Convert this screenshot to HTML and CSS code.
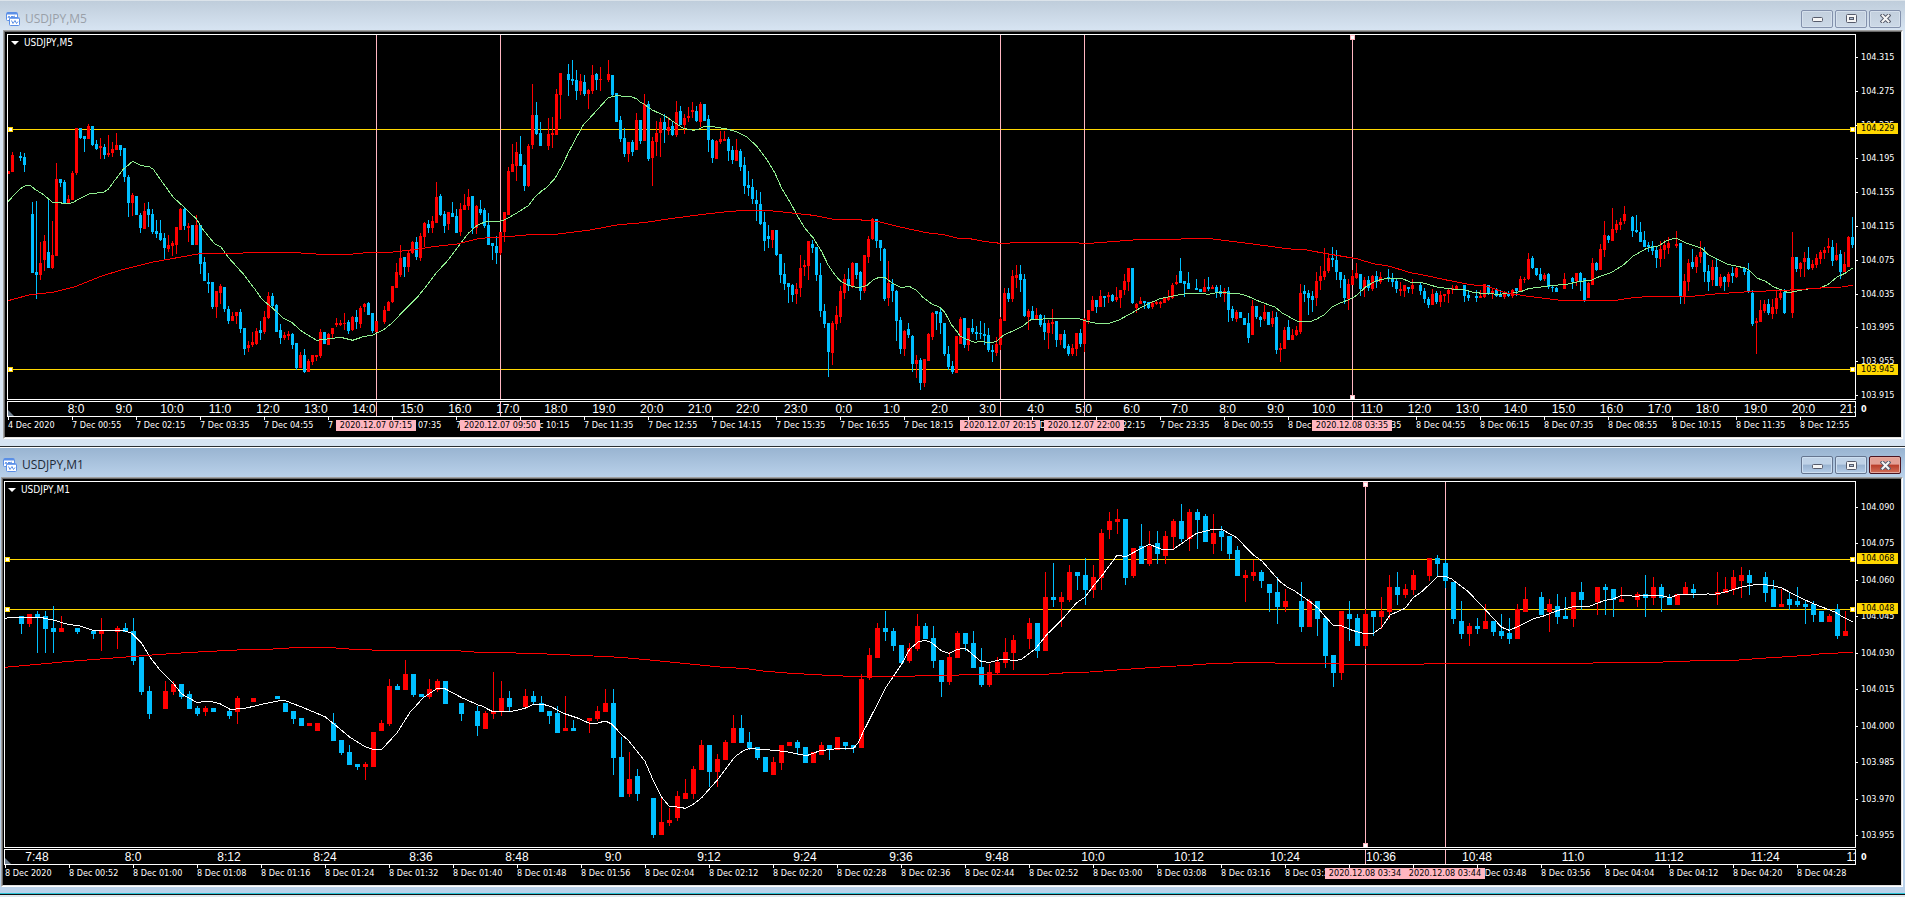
FILE: index.html
```html
<!DOCTYPE html>
<html lang="en">
<head>
<meta charset="utf-8">
<title>USDJPY charts</title>
<link rel="stylesheet" href="styles.css">
</head>
<body>
<svg class="sprite" aria-hidden="true">
  <symbol id="i-chart" viewBox="0 0 14 14">
    <rect x="0.5" y="0.5" width="11" height="8" rx="1" fill="#fff" stroke="#5b8fe6"/>
    <path d="M1 1.5h10" stroke="#5b8fe6" stroke-width="2"/>
    <path d="M2 6l1-2 1 2 2-2 1 1 2-1" fill="none" stroke="#5b8fe6"/>
    <rect x="3.5" y="5.5" width="10" height="8" rx="1" fill="#fff" stroke="#5b8fe6"/>
    <path d="M4 6.5h9" stroke="#7ba6ee" stroke-width="1"/>
    <path d="M5.5 8.5l1.500 3 2-3 1.500 3 1.500-2" fill="none" stroke="#5b8fe6"/>
  </symbol>
  <symbol id="i-min" viewBox="0 0 11 9">
    <rect x="0.5" y="3.500" width="10" height="4" rx="1" fill="#f6f6f6" stroke="#565b6b"/>
  </symbol>
  <symbol id="i-max" viewBox="0 0 11 9">
    <rect x="0.5" y="0.500" width="10" height="8" rx="1" fill="#f6f6f6" stroke="#565b6b"/>
    <rect x="3.500" y="3.500" width="4" height="2" fill="#aebfd3" stroke="#565b6b"/>
  </symbol>
  <symbol id="i-close" viewBox="0 0 11 9">
    <path d="M2.500 1.500l6 6M8.500 1.500l-6 6" stroke="#565b6b" stroke-width="4" stroke-linecap="square"/>
    <path d="M2.500 1.500l6 6M8.500 1.500l-6 6" stroke="#f6f6f6" stroke-width="2" stroke-linecap="square"/>
  </symbol>
</svg>
<main class="desk">
  <section class="win win-back" aria-label="USDJPY,M5">
    <header class="bar">
      <svg class="bar-icon"><use href="#i-chart"/></svg>
      <h2 class="bar-title">USDJPY,M5</h2>
      <button class="ctl" aria-label="Minimize"><svg><use href="#i-min"/></svg></button>
      <button class="ctl" aria-label="Maximize"><svg><use href="#i-max"/></svg></button>
      <button class="ctl" aria-label="Close"><svg><use href="#i-close"/></svg></button>
    </header>
    <div class="client"><div class="chart" id="m5"></div></div>
  </section>
  <section class="win win-front" aria-label="USDJPY,M1">
    <header class="bar">
      <svg class="bar-icon"><use href="#i-chart"/></svg>
      <h2 class="bar-title">USDJPY,M1</h2>
      <button class="ctl" aria-label="Minimize"><svg><use href="#i-min"/></svg></button>
      <button class="ctl" aria-label="Maximize"><svg><use href="#i-max"/></svg></button>
      <button class="ctl ctl-close" aria-label="Close"><svg><use href="#i-close"/></svg></button>
    </header>
    <div class="client"><div class="chart" id="m1"></div></div>
  </section>
</main>
<script src="charts.js"></script>
</body>
</html>
```
FILE: styles.css
```css
* { box-sizing: border-box; }
body { margin: 0; background: #b9d1ea; font-family: "DejaVu Sans Condensed", "DejaVu Sans", sans-serif; }
.sprite { display: none; }
.desk { display: grid; grid-template-rows: 448fr 449fr; height: 100vh; min-height: 500px; }
.win { display: flex; flex-direction: column; min-width: 0; min-height: 0; }
.win-back { background: #d7e4f2; padding: 0 2px 7px 3px; border-bottom: 1px solid #fff; box-shadow: inset 0 -1px #2b2f33; padding-bottom: 8px; }
.win-front { background: #b9d1ea; padding: 0 2px 10px 1px; box-shadow: inset 0 -2px #dfe6ec, inset 0 -3px #101010, inset 0 -4px #2bc4d8; }

.bar { display: flex; align-items: center; gap: 2px; flex: none; }
.win-back .bar { height: 30px; margin: 0 -2px 0 -3px; padding: 6px 4px 0 6px; background: linear-gradient(#bfcddb, #d7e4f2); border-top: 1px solid #dbe3ea; }
.win-front .bar { height: 29px; margin: 0 -2px 0 -1px; padding: 5px 4px 0 3px; background: linear-gradient(#99b4d1, #b9d1ea); }
.bar-icon { width: 14px; height: 14px; margin-right: 3px; flex: none; }
.bar-title { flex: 1; margin: 0; font: 12px/16px "Open Sans", sans-serif; color: #1e2a38; }
.win-back .bar-title { color: #9aa0a8; }
.ctl { display: flex; align-items: center; justify-content: center; width: 32px; height: 18px; padding: 0; border: 1px solid #8391ac; border-radius: 2px; background: linear-gradient(#c2cfdd, #ccd9e7); box-shadow: inset 0 0 0 1px #d5e0ec; }
.ctl svg { width: 11px; height: 9px; }
.win-front .ctl { border-color: #65758f; background: linear-gradient(#bfd2e7 45%, #98b2d0 50%, #b4cde8); box-shadow: inset 0 0 0 1px #cddff1; }
.win-front .ctl-close { border-color: #4b1420; background: linear-gradient(#e3a095 45%, #b93d29 50%, #d2705a); box-shadow: inset 0 0 0 1px #e6a99f; }

.client { flex: 1; min-height: 0; display: grid; border: 1px solid; border-color: #a0a0a0 #fff #fff #a0a0a0; }
.chart { display: grid; grid-template-columns: minmax(0, 1fr) 45px; grid-template-rows: minmax(0, 1fr) 16px 20px; background: #000; color: #fff; border: 1px solid; border-color: #696969 #e3e3e3 #e3e3e3 #696969; padding: 2px 0 0 2px; font-size: 9px; line-height: 11px; min-height: 0; }
.win-front .chart { padding-left: 1px; }
.plot { position: relative; border: 1px solid #fff; margin-bottom: 1px; min-height: 0; }
.plot svg, .hours svg { position: absolute; inset: 0; width: 100%; height: 100%; display: block; }
.menu { position: absolute; left: 3px; top: 2px; display: flex; align-items: center; gap: 5px; padding: 0; border: 0; background: none; color: #fff; font: 10px/11px "DejaVu Sans Condensed", sans-serif; }
.menu::before { content: ""; border: 4px solid transparent; border-top-color: #fff; border-bottom: 0; }
.prices { position: relative; display: flex; flex-direction: column; justify-content: space-between; padding-top: 18px; }
.win-front .prices { padding: 21px 0 8px; }
.price { display: flex; align-items: center; gap: 3px; }
.price::before { content: ""; width: 2px; height: 1px; background: #fff; }
.tag { position: absolute; left: 1px; width: 41px; margin-top: -6px; padding-left: 4px; background: #ffd700; color: #000; }
.hours { position: relative; display: flex; overflow: hidden; border: 1px solid #fff; font: 12px/14px "Liberation Sans", sans-serif; }
.hours::before { content: ""; position: absolute; left: 0; bottom: 0; border: 3px solid transparent; border-left-color: #708090; border-bottom-color: #708090; }
.hour { flex: none; text-align: center; }
.rank { padding: 3px 0 0 5px; font-weight: bold; }
.dates { position: relative; display: flex; margin: 0 1px; white-space: nowrap; }
.date { flex: none; }
.date::before { content: ""; display: block; width: 1px; height: 3px; background: #fff; }
.when { position: absolute; top: 3px; width: 80px; margin-left: -40px; background: #ffb6c1; color: #000; text-align: center; }
```
FILE: charts.js
```js
// Candles: colour (r = up, b = down), then high, body top, body bottom, low.
// Heights are in grid units, three to a pixel. "-" is a bar without trades.
// Each run starts at the given bar position.
const GRID = 3;

const m5 = {
  id: "m5", name: "USDJPY,M5", view: [8, 35, 1847, 364], step: 4, half: 1,
  runs: {
    8: `r514,514,521,521 r456,465,515,515 - b456,467,473,483 b459,471,494,515 - b606,642,818,818 b602,816,824,896 r726,789,824,840 r705,723,779,812 b600,756,803,803 r662,765,803,806 r489,537,767,767 b537,537,548,560 b541,546,611,611 r585,597,611,611 r513,519,599,599 r384,384,519,525 b384,384,414,417 b408,408,417,456 r372,378,416,416 b378,378,435,438 b420,432,446,450 r414,437,444,477 b432,441,465,477 r405,459,465,471 r426,447,459,471 r399,435,449,450 b435,435,450,468 b444,444,531,546 b525,531,608,651 r579,585,608,648 b588,588,645,645 b639,645,684,699 r609,632,686,686 b606,627,644,681 b627,642,695,702 b660,693,702,714 b660,699,720,723 b699,714,744,777 r705,735,747,756 r723,729,738,768 r681,681,735,762 r624,627,689,689 b621,627,678,690 r669,678,684,726 b675,675,735,735 r645,675,735,735`,
    200: `b675,675,792,822 b771,786,843,843 b819,846,852,879 b846,846,921,927 r873,873,921,954 r852,858,879,912 b861,861,927,936 b918,927,963,972 r936,948,963,963 r936,936,948,972 b927,936,987,999 b984,984,1047,1065 r1023,1035,1044,1056 r996,1026,1035,1041 r984,993,1032,1035 b963,990,999,1020 r933,951,996,1002 r876,888,953,957 b879,888,918,921 b912,915,996,996 b972,990,1014,1032 r996,1005,1014,1020 r993,1002,1008,1020 b999,1002,1035,1047 b1029,1029,1104,1110 r1056,1065,1104,1104 b1047,1065,1116,1119 r1077,1083,1116,1116 r1065,1065,1086,1095 r1065,1065,1071,1083 r987,996,1068,1074 b996,996,1032,1032 r999,1002,1035,1035 r984,984,1002,1017 r954,969,975,981 r960,969,975,978 r939,969,972,990 b960,966,993,1002 r948,951,990,993 b930,951,966,987 r918,924,972,984 r909,912,921,936 b906,909,945,945 b939,939,993,999 r963,963,996,996 - r918,930,966,972 r903,906,933,933 r858,858,906,909 r789,816,864,864`,
    400: `r735,774,825,831 b771,771,801,831 r750,759,801,816 r723,726,759,762 b711,726,771,780 r699,708,774,783 r666,669,711,741 b660,672,684,699 r648,663,684,699 r546,591,669,669 b582,588,645,648 b633,642,678,699 r636,636,672,690 b606,639,651,651 b627,648,699,699 r609,627,696,708 r582,615,629,630 r567,591,618,630 b588,588,684,702 r615,618,684,702`,
    480: `b600,627,639,645 b624,630,678,684 b639,675,735,735 b729,729,738,780 b708,738,759,792 r696,696,759,765 r636,636,696,726 r501,513,645,645 r432,492,516,516 r426,456,497,543 b408,462,497,498 b492,495,558,573 r432,438,558,561 r252,345,435,447 b306,345,402,405 b366,399,438,438 - r354,402,438,450 r351,399,405,444 r267,282,405,405 r219,219,285,357 - b192,222,240,288 b180,237,243,255 b210,240,273,300 r222,243,273,285 b225,246,282,288 r267,270,282,327 r195,225,273,282 b219,222,240,270 r201,237,240,273 - r180,222,240,246 b225,225,285,288 b279,279,366,366 b348,360,417,426 b384,414,462,471 r426,426,462,486 b420,426,456,468 r339,360,450,450 b360,360,423,432 r282,312,423,423 b303,312,477,483 r411,423,474,558 r363,399,426,468 r354,366,399,471 b342,366,390,429 r351,381,393,405 b363,378,405,408 r303,336,405,411`,
    680: `b318,333,375,375 r342,354,375,402 r321,348,354,366 r306,330,336,354 b318,333,363,366 r306,312,366,381 b312,312,363,363 b345,357,420,456 b417,420,474,489 r420,423,477,477 r393,417,426,432 r393,417,423,423 b411,417,453,483 b438,450,480,492 r417,450,483,483 b447,453,501,513 b471,495,558,582 b513,555,564,588 b537,561,597,612 b570,600,612,663 b576,612,672,675 b636,666,723,753 b675,708,717,744 r690,690,720,744 b690,690,765,768 b762,762,825,849 b789,822,852,870 b849,849,861,909 b852,855,885,906 r849,867,882,912 r765,804,864,891 r780,795,801,828 r723,723,798,840 b720,732,744,759 b741,741,825,843 b789,825,933,951 b912,933,972,984 b969,969,1056,1131 r963,969,1059,1095 r918,945,972,990 r858,873,951,969 r822,837,879,897 b804,837,858,873 r786,789,858,864 b789,789,825,837 b813,816,873,900 r765,765,873,879 r708,717,771,789 r654,657,717,720 b657,657,723,744`,
    880: `b720,720,744,783 b744,747,897,903 r783,849,894,918 b837,852,873,906 b870,873,963,1023 b951,960,1047,1062 r990,993,1047,1068 b969,987,1005,1014 b1005,1008,1092,1116 r1065,1080,1092,1134 b1074,1080,1149,1170 r1077,1077,1149,1161 r999,1002,1083,1083 r936,939,1011,1020 b933,933,942,990 b921,936,969,1002 b969,969,1062,1068 b1038,1062,1101,1110 b1083,1098,1116,1122 r1008,1008,1119,1119`,
    960: `r951,957,1032,1032 b954,954,1035,1044 r984,984,1035,1053 b957,984,996,1002 b978,996,1002,1020 b963,999,1002,1017 b969,1002,1008,1035 b984,1005,1050,1056 b1035,1050,1056,1086 r1011,1032,1059,1068 r951,957,1035,1050 r864,879,963,963 b864,879,897,906 r810,828,897,906 r795,825,834,864 b795,822,840,876 b822,837,948,951 r927,933,951,990 b918,933,957,960 r924,945,960,960 b942,945,975,981 b945,969,996,1020 r960,969,999,1047 r927,966,972,1002 b963,963,1020,1041 r1002,1002,1020,1035 b990,1002,1044,1047 b1032,1038,1062,1068 r1032,1044,1062,1068 r999,999,1047,1068 b987,999,1032,1041 r954,957,1032,1056 r930,930,960,972 r888,900,933,933 b900,900,921,939 r870,888,921,921 b888,888,894,921 r876,885,891,909 b882,885,903,906 r861,891,900,906 r870,870,894,924 r822,843,870,885 r804,804,846,873 b804,804,909,912 r909,912,924,939 r891,903,912,912 b903,903,909,927 b906,906,924,927 r906,909,921,927 r903,906,912,915`,
    1160: `r903,906,912,924 r891,894,909,909 r870,891,900,903 r849,855,894,897 r825,846,852,855 b774,813,849,849 b843,843,852,891 b816,849,867,867 - b837,864,870,870 b867,867,876,876 r837,861,876,876 b831,861,867,873 r855,861,867,867 b855,861,876,894 b855,873,882,891 r864,873,882,906 b861,873,930,966 b918,927,954,963 r930,936,957,966 b936,936,954,954 b954,954,975,975 b939,969,1014,1029 r900,918,1005,1005 b918,918,951,957 b948,951,960,981 r915,936,957,963 b936,936,975,975 r933,954,972,981 b936,951,1050,1062 r1029,1044,1050,1086 r981,990,1047,1047 b960,981,1020,1020 r987,1005,1020,1020 r978,990,1005,1008 r852,879,996,1002 b855,873,882,906 b870,879,894,945 b873,888,900,936 r816,843,894,918 r798,828,843,870 r744,813,831,840 r762,774,813,819 b741,774,780,801 b750,780,816,840 b816,816,840,864 b825,837,894,912 r837,852,897,930 r810,828,855,855 r789,819,834,837`,
    1360: `b822,822,867,888 r831,840,864,891 b828,840,864,873 r825,828,867,873 b813,828,846,864 r816,831,846,852 - b807,831,837,846 b819,834,846,861 b837,843,867,879 r846,867,873,888 r855,855,873,891 b861,861,867,879 r837,855,867,882 - b846,855,873,885 b864,873,897,909 b891,897,915,924 r867,882,915,915 b873,879,906,912`,
    1440: `r873,885,906,921 r882,882,888,906 r867,870,882,909 r855,864,870,882 r855,858,867,867 - b855,855,888,906 b870,885,894,903 - b870,888,894,906 r870,888,894,894 r852,852,891,894 b855,855,882,885 r867,873,882,897 b864,870,888,891 b870,885,891,891 r873,876,891,897 b873,879,888,891 r867,870,888,894 b864,864,873,888 r828,837,873,876 r831,837,840,849 r759,777,837,840 b768,774,804,807 b804,804,825,828 b804,822,840,843 r819,825,837,843 b819,822,861,867 b855,861,864,876 b861,864,876,876 - r819,837,867,867 - b831,834,846,867 r819,819,843,858 b816,819,843,873 b834,834,900,906 r846,849,894,894 r774,789,855,855 b786,789,810,813`,
    1600: `r732,747,810,810 r663,705,750,771 b705,708,720,729 r624,687,723,723 r660,672,690,699 r654,666,675,690 r618,642,663,672 - b648,651,693,711 b645,690,696,699 b666,696,726,726 b693,720,741,741 b726,735,741,756 b723,738,753,765 b741,750,774,804 r723,747,777,801 r720,735,750,777 r711,729,744,762 - r693,732,738,744 b729,729,891,912 r822,843,888,912 r777,789,846,873 b747,786,801,807 r765,771,801,819 r723,756,771,789 b741,756,816,846 b795,813,846,873 r780,801,840,858 b774,801,858,858 r822,831,858,864 b828,831,846,873 r816,822,846,861 b801,819,828,849 r798,804,831,834 - b801,804,816,825 b789,813,873,879 b870,879,972,978 r954,963,969,1062 r900,930,966,966 r900,912,933,939 b897,912,939,945 r897,921,942,957 r873,894,927,942 r870,879,894,900 b867,876,939,942 - r696,771,939,954 b771,771,807,816`,
    1800: `r786,789,807,831 r756,774,786,831 b741,774,807,810 r780,792,804,810 r762,774,795,804 r750,756,777,792 r741,750,759,777 r714,738,744,759 b720,741,783,798 r729,765,780,783 b750,762,816,837 r756,792,816,816 r708,711,801,801 b651,711,735,744`
  },
  averages: [
    { color: "#90ee90", parts: {
      0: "24,605 42,585 60,567 78,556 90,556 105,568 132,585 156,606 204,611 218,608 240,595 270,581 310,577 325,568 345,540 370,508 398,484 425,497 448,500 460,508 485,544 520,592 555,624 590,658 610,690 645,733 662,740 685,772 730,822 765,868 785,897 830,935 850,955 875,967 905,994 950,1021 990,1016 1022,1012 1058,1021 1090,1010 1118,1005 1150,990 1180,966 1210,933 1250,894 1280,857 1300,830 1310,817 1340,785 1380,733 1405,700 1430,677",
      480: "0,672 20,664 62,664 85,654 110,639 145,617 165,590 185,573 200,562 225,535 245,500 265,458 285,420 310,375 345,337 385,293 410,287 455,290 470,297 480,306 490,311 515,329 555,348 590,372 610,385 640,391 655,388 672,379 705,381 740,387 770,395 800,411 830,438 860,478 885,520 905,565 930,606 955,652 975,685 1000,714 1025,755 1045,796 1065,825 1080,842 1105,856 1135,863 1160,857 1180,839 1200,831 1215,833 1240,851 1262,862 1290,860 1308,870 1330,893 1355,912 1380,922 1395,938 1415,975 1435,1000",
      960: "0,1008 20,1018 45,1027 65,1024 90,1029 110,1024 130,1006 160,992 190,977 215,957 250,957 278,954 300,956 360,957 385,965 420,972 450,969 475,961 510,942 550,919 575,907 600,896 650,886 690,879 730,881 745,883 770,878 830,880 860,887 900,905 945,921 965,938 1010,963 1050,965 1070,957 1095,943 1115,922 1135,911 1165,900 1190,886 1220,858 1250,842 1275,836 1325,835 1350,846 1390,849",
      1425: "0,850 35,861 70,866 120,870 150,878 220,883 260,880 290,874 310,866 370,858 430,852 455,846 500,840 525,829 560,817 595,795 625,768 665,745 700,738 725,722 752,714 785,730 830,745 850,764 905,792 960,804 975,812 995,834 1020,843 1045,860 1090,878 1140,868 1185,864 1210,853 1235,832 1260,820 1283,804" } },
    { color: "#ff0000", parts: {
      0: "24,902 90,884 160,877 225,860 300,830 360,811 460,786 560,768 600,761 720,760 750,757 870,757 960,763 1050,763 1100,758 1170,757 1240,749 1300,740 1370,732 1435,716",
      480: "0,715 80,710 150,704 235,702 330,690 415,674 490,668 570,656 660,644 750,634 810,631 860,631 1000,646 1060,658 1120,658 1190,664 1270,683 1340,698 1390,704 1440,716",
      960: "30,716 70,724 120,730 180,728 320,728 390,730 440,726 530,719 650,718 690,715 740,715 800,722 880,732 980,746 1040,750 1100,761 1190,776 1240,791 1290,799 1350,818 1390,825",
      1425: "0,826 60,839 130,853 190,860 240,878 310,889 400,900 580,900 630,892 720,888 810,888 880,881 970,875 1080,871 1130,868 1200,863 1250,861 1283,856" } }
  ],
  levels: [[129, "104.229"], [369, "103.945"]],
  times: [[376, "2020.12.07 07:15"], [500, "2020.12.07 09:50"], [1000, "2020.12.07 20:15"], [1084, "2020.12.07 22:00"], [1352, "2020.12.08 03:35"]],
  selected: 1352,
  price: { from: 104315, step: 40, count: 11 },
  hours: { from: 480, step: 60, count: 38, width: 48, lead: 44 },
  dates: { first: "4 Dec 2020", day: 7, from: 55, step: 80 }
};

const m1 = {
  id: "m1", name: "USDJPY,M1", view: [5, 42, 1850, 365], step: 8, half: 2,
  runs: {
    21: `b528,528,552,582 r522,522,552,561 b513,522,531,639 b513,528,567,639 b498,564,576,639 r528,564,576,576 - b564,564,576,582 - b573,573,582,597 r534,573,582,633 - r558,564,576,627 b549,564,576,576 b534,573,663,675 b651,651,756,765 b738,753,822,837 - r723,753,807,807 r723,732,756,765 b732,732,771,777 b753,762,807,807 b798,804,822,828 r798,804,816,828 b804,804,816,816 - b804,813,828,837 r768,774,816,852 - r774,774,786,786 - - b768,768,777,777 b789,789,816,816 b813,813,837,852 b834,834,858,858 r849,849,858,858 r849,849,873,873 - b819,849,903,903`,
    341: `b900,900,939,945 b915,936,975,975 b972,972,981,990 r966,972,981,1020 r876,876,981,981 r840,849,873,873 r717,738,852,858 b732,738,750,750 r660,702,750,750 b702,702,765,771 b762,762,771,771 r717,747,771,777 r717,723,750,756 b723,723,792,792 - b789,789,822,843 - b798,813,858,888`,
    485: `r813,819,867,867 r696,813,822,837 r723,774,816,828 b753,774,801,816 - r747,768,801,807 b753,768,786,795 b768,789,816,816 b813,813,828,852 b798,819,879,879 r768,864,873,873 b840,864,873,873 - r834,834,843,879 r798,813,837,843 r747,789,816,816 b747,789,954,1005 b891,951,1071,1071 r936,1017,1062,1071 b987,1008,1062,1083 - b1074,1074,1185,1194 r1068,1146,1185,1185 r1104,1140,1149,1158 r1053,1068,1134,1143 r1017,1059,1077,1077 r978,987,1062,1077 r900,915,990,990 b915,915,996,1041 r942,957,996,1041`,
    725: `r900,906,960,960 r825,864,909,909 b825,864,909,909 b876,906,924,930 b921,921,954,960 b951,951,996,996 r951,966,1005,1005 r915,915,969,990 r906,906,918,918 b900,906,924,945 b921,921,969,969 r936,936,969,969 r906,915,945,945 b915,915,930,960 r891,891,930,930 b906,906,918,930 b915,915,924,939 r702,717,924,924 r624,645,714,720 r549,564,654,654 b513,564,576,603 b564,573,618,633 b615,615,669,669 r609,624,663,669 r522,558,627,633 b549,558,597,597 b558,594,663,684 b660,660,726,771 r636,651,726,735 r573,579,654,654`,
    965: `b579,579,612,633 b573,609,684,684 b624,681,735,741 r672,696,735,741 r651,666,699,705 r594,636,669,684 r585,600,639,690 - r534,549,597,627 b549,549,633,654 r396,471,633,633 b369,471,480,501 r456,471,486,561 r375,396,480,486 b396,396,408,450 b354,405,450,495 r375,411,450,474 r267,279,414,450 r216,243,270,297 r207,237,246,282 b237,237,414,435 r324,324,408,414 b252,318,372,372 r273,318,372,378 b273,309,342,372 r273,288,348,372 r237,243,291,327 b192,243,297,306 r207,216,297,333 b207,216,240,327`,
    1205: `b222,228,306,306 r222,279,312,342 b258,273,291,333 b288,288,342,357 b318,330,408,408 r390,405,414,486 r360,396,408,423 b390,396,423,444 b432,432,459,516 b411,456,501,552 r447,483,501,516 - b426,483,561,576 r477,483,561,561 b483,483,537,588 b534,534,648,684 b645,645,699,741 r513,513,699,720 b483,522,537,603 b522,534,618,618 r507,522,618,627 b513,513,531,588 r471,513,531,567 r405,441,516,537 b396,441,465,495 r432,447,465,474 r390,405,450,465 - r354,354,408,423 b345,354,372,408`,
    1445: `b360,369,423,444 b426,426,537,552 b483,543,582,597 r549,558,582,618 b534,558,567,582 r492,543,567,567 b543,543,576,588 b522,573,588,597 b534,579,597,612 r492,507,597,597 r441,477,516,516 - b456,471,525,525 r477,492,516,576 b462,498,531,552 b471,528,537,537 r456,456,537,561 b426,456,480,510 - r441,441,486,525 b432,441,450,525 b447,447,480,531 r441,477,486,486 - r456,462,480,501 b405,462,474,531 r411,441,474,495 b432,441,474,516 b462,471,495,495 r462,462,495,495`,
    1685: `r426,441,465,465 b432,447,459,474 - - r396,456,465,495 r411,447,459,459 r390,411,450,465 r381,405,423,474 b390,405,429,465 - b396,411,459,486 b420,447,501,501 r447,492,501,501 b456,477,495,510 b441,483,495,501 b483,492,501,552 b483,492,525,546 b513,513,546,546 r522,528,546,546 b492,507,588,597 r513,573,588,588`
  },
  averages: [
    { color: "#ffffff", parts: {
      0: "14,536 28,532 120,532 160,540 200,552 240,558 280,571 370,571 395,580 425,610 450,652 480,690 520,730 545,762 590,787 630,784 660,791 690,808 730,806 790,792 850,780 900,799 975,830 1020,867 1050,892 1095,920 1120,928 1145,928 1190,880 1230,817 1270,773 1310,746 1335,746 1385,773 1435,795",
      480: "0,795 40,816 100,813 135,805 160,793 190,793 215,801 250,820 290,833 328,850 350,850 376,843 395,852 425,884 445,901 495,964 520,1022 545,1072 568,1099 592,1101 616,1105 640,1093 665,1073 712,1020 765,950 790,932 808,926 850,928 920,935 980,947 1020,932 1070,926 1120,925 1135,908 1150,875 1168,840 1216,745 1264,674 1290,626 1315,606 1336,601 1355,608 1385,633 1408,640 1432,628",
      960: "0,627 16,625 40,645 64,665 90,667 130,657 165,662 185,657 225,628 262,582 305,540 350,488 376,471 400,438 430,402 470,347 500,349 525,335 568,313 605,328 640,328 680,300 710,280 760,268 785,268 830,293 880,345 905,362 960,425 980,440 1000,450 1050,485 1075,505 1096,530 1120,556 1140,556 1180,572 1215,581 1240,580 1265,562 1290,525 1335,505 1360,473 1385,455",
      1425: "37,411 61,409 80,417 130,455 180,508 230,562 253,571 280,559 325,536 350,530 400,511 445,500 495,498 540,481 565,477 590,466 635,469 670,465 700,465 735,473 757,465 800,463 850,462 870,463 905,455 950,441 1000,432 1045,437 1070,444 1120,470 1165,491 1230,516 1255,532 1283,546" } },
    { color: "#ff0000", parts: {
      0: "14,682 100,674 210,664 340,654 430,647 510,641 610,635 730,629 820,627 900,622 980,622 1060,628 1140,631 1370,632 1435,637",
      480: "80,638 200,642 340,648 420,652 500,659 620,671 720,681 800,686 850,693 920,699 1040,706 1110,709 1250,709 1435,706",
      960: "0,704 240,704 320,698 390,696 500,688 600,681 700,675 750,671 850,668 940,668 950,670 1130,670 1140,673 1390,673",
      1425: "5,670 500,670 510,667 690,667 820,662 930,661 1010,655 1150,646 1200,640 1283,638" } }
  ],
  levels: [[119, "104.068"], [169, "104.048"]],
  times: [[1365, "2020.12.08 03:34"], [1445, "2020.12.08 03:44"]],
  selected: 1365,
  price: { from: 104090, step: 15, count: 10 },
  hours: { from: 468, step: 12, count: 20, width: 96, lead: -16 },
  dates: { first: "8 Dec 2020", day: 8, from: 52, step: 8 }
};

const rect = (x, y, w, h, fill) => `<rect x="${x}" y="${y}" width="${w}" height="${h}" fill="${fill}"/>`;
const handle = (x, y, color) => rect(x, y, 5, 5, color) + rect(x + 1, y + 1, 3, 3, "#fff");
const px = v => Math.round(v / GRID);

function drawPlot(c) {
  const [left, top, width, height] = c.view;
  let out = "";
  for (const [y] of c.levels) out += rect(left, y, width, 1, "#ffd700");
  for (const [x] of c.times) out += rect(x, top, 1, height, "#ffb6c1");
  for (const [start, run] of Object.entries(c.runs)) {
    run.split(" ").forEach((bar, i) => {
      if (bar === "-") return;
      const x = Number(start) + i * c.step;
      const [high, open, close, low] = bar.slice(1).split(",").map(px);
      const fill = bar[0] === "r" ? "#ff0000" : "#00bfff";
      out += rect(x, high, 1, Math.max(low - high, 1), fill);
      out += rect(x - c.half, open, c.half * 2 + 1, Math.max(close - open, 1), fill);
    });
  }
  for (const line of c.averages) {
    const points = Object.entries(line.parts).map(([start, part]) =>
      part.split(" ").map(p => {
        const [x, y] = p.split(",").map(Number);
        return (Number(start) + x / GRID).toFixed(1) + "," + (y / GRID).toFixed(1);
      }).join(" ")).join(" ");
    out += `<polyline points="${points}" fill="none" stroke="${line.color}" stroke-width="1"/>`;
  }
  for (const [y] of c.levels) {
    out += handle(left, y - 2, "#ffd700") + handle(left + width - 5, y - 2, "#ffd700");
  }
  out += handle(c.selected - 2, top, "#ffb6c1") + handle(c.selected - 2, top + height - 4, "#ffb6c1");
  return `<svg viewBox="${c.view.join(" ")}" preserveAspectRatio="none" shape-rendering="crispEdges">${out}</svg>`;
}

function drawChart(c) {
  const [left, top, width, height] = c.view;
  const share = v => (v / width * 100).toFixed(4) + "%";
  const two = n => String(n).padStart(2, "0");

  let prices = "";
  for (let i = 0; i < c.price.count; i++) {
    prices += `<span class="price">${((c.price.from - i * c.price.step) / 1000).toFixed(3)}</span>`;
  }
  for (const [y, text] of c.levels) {
    prices += `<span class="tag" style="top:${((y - top + 1) / (height + 2) * 100).toFixed(3)}%">${text}</span>`;
  }

  let hours = "";
  for (let i = 0; i < c.hours.count; i++) {
    const t = c.hours.from + i * c.hours.step;
    const lead = i ? "" : `;margin-left:${share(c.hours.lead)}`;
    hours += `<span class="hour" style="width:${share(c.hours.width)}${lead}">${Math.floor(t / 60) % 24}:${t % 60}</span>`;
  }
  const marks = c.times.map(([x]) => rect(x, 0, 1, 14, "#ffb6c1")).join("");
  hours += `<svg viewBox="${left} 0 ${width} 14" preserveAspectRatio="none" shape-rendering="crispEdges">${marks}</svg>`;

  let dates = "";
  for (let i = 0; i < 29; i++) {
    const t = c.dates.from + (i - 1) * c.dates.step;
    const day = c.dates.day + Math.floor(t / 1440);
    const text = i ? `${day} Dec ${two(Math.floor(t / 60) % 24)}:${two(t % 60)}` : c.dates.first;
    dates += `<span class="date" style="width:${share(64)}">${text}</span>`;
  }
  for (const [x, text] of c.times) {
    dates += `<span class="when" style="left:${share(x - left)}">${text}</span>`;
  }

  document.getElementById(c.id).innerHTML =
    `<div class="plot">${drawPlot(c)}<button class="menu">${c.name}</button></div>` +
    `<div class="prices">${prices}</div>` +
    `<div class="hours">${hours}</div><div class="rank">0</div>` +
    `<div class="dates">${dates}</div>`;
}

drawChart(m5);
drawChart(m1);
```
